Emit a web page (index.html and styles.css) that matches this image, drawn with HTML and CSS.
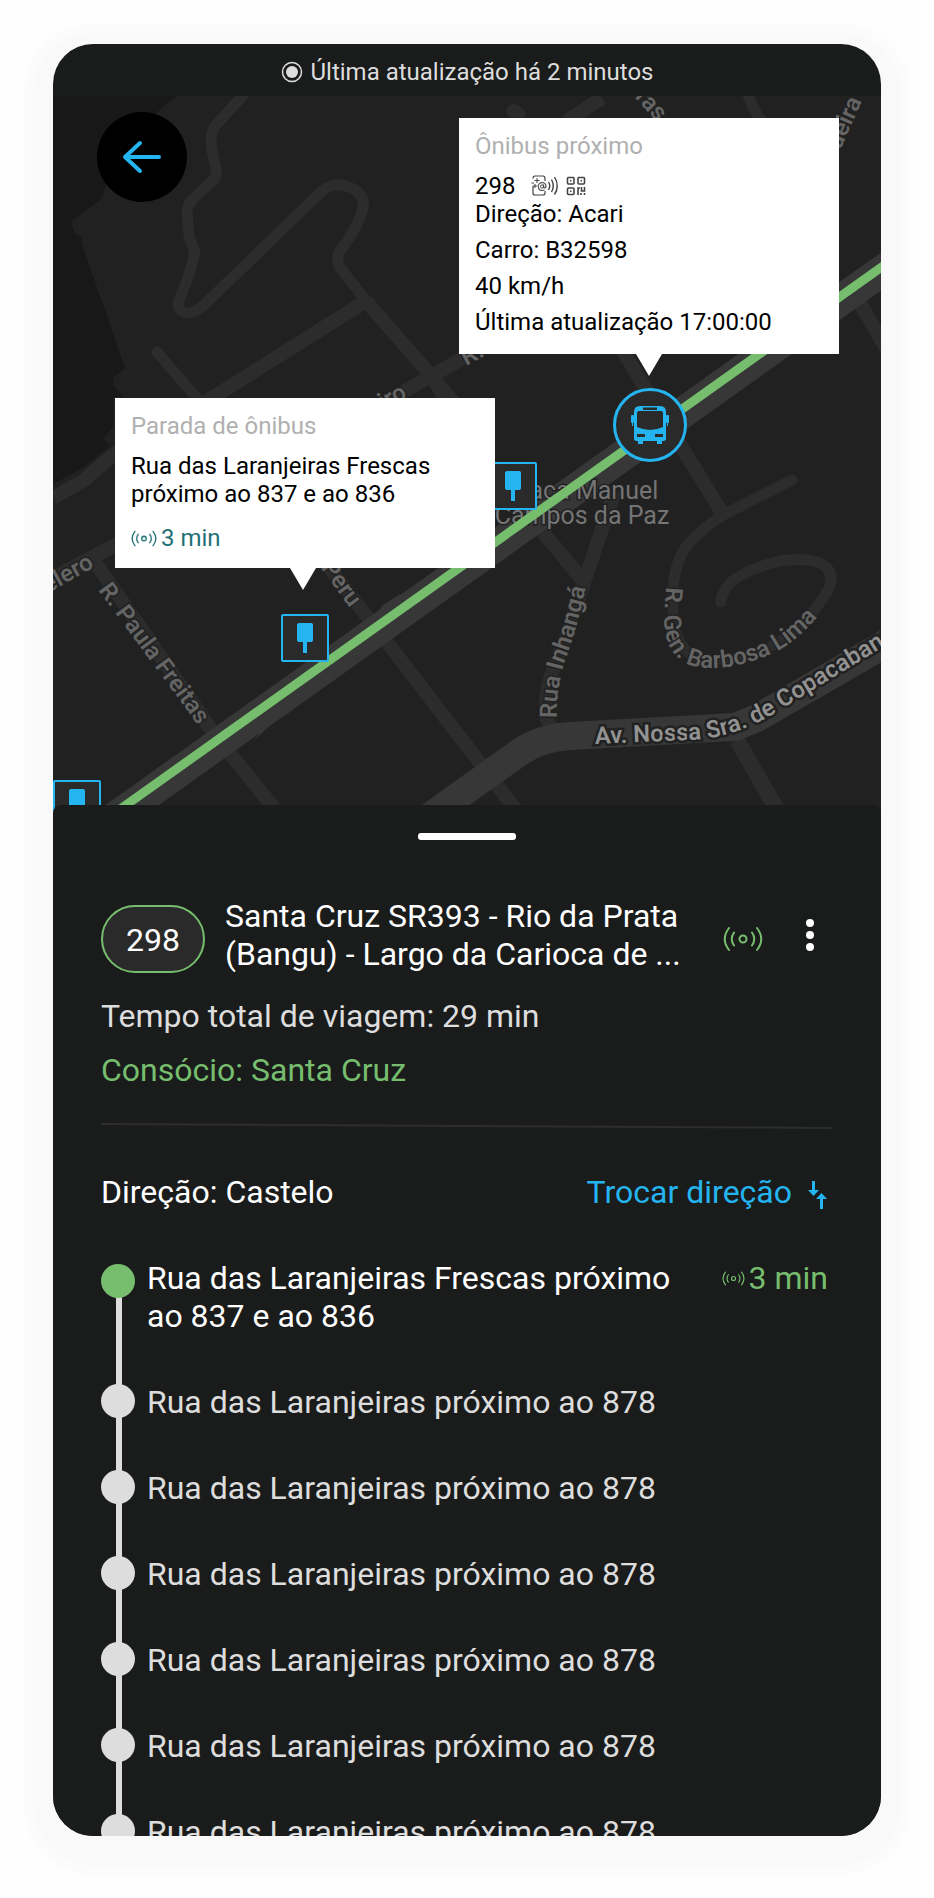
FILE: index.html
```html
<!DOCTYPE html>
<html lang="pt-BR">
<head>
    <meta charset="UTF-8">
    <meta name="viewport" content="width=device-width, initial-scale=1.0">
    <title>Linha 298</title>
    <link rel="stylesheet" href="styles.css">
</head>
<body>
    <!-- shared icons -->
    <svg class="sprite" aria-hidden="true">
        <symbol id="signal" viewBox="0 0 40 26">
            <g fill="none" stroke="currentColor" stroke-width="2" stroke-linecap="round">
                <circle cx="20" cy="13" r="3.5"/>
                <path d="M11 6.5Q6.500 13 11 19.500M6 2Q-2.500 13 6 24M29 6.500Q33.500 13 29 19.500M34 2Q42.500 13 34 24"/>
            </g>
        </symbol>
        <symbol id="stop" viewBox="0 0 48 48">
            <rect x="1" y="1" width="46" height="46" rx="1" fill="#2a2a2a" stroke="#24b5f0" stroke-width="2"/>
            <rect x="16" y="9" width="16" height="19" rx="2" fill="#24b5f0"/>
            <rect x="22" y="27" width="4" height="12" fill="#24b5f0"/>
        </symbol>
    </svg>

    <div class="phone">
        <header class="status">
            <svg class="status-icon" viewBox="0 0 22 22" aria-hidden="true">
                <circle cx="11" cy="11" r="9.500" fill="none" stroke="#ddd" stroke-width="1.500"/>
                <circle cx="11" cy="11" r="6" fill="#ddd"/>
            </svg>
            <span>Última atualização há 2 minutos</span>
        </header>

        <section class="map">
            <svg class="streets" viewBox="53 96 828 718" preserveAspectRatio="xMidYMin slice" aria-hidden="true">
                <rect x="53" y="96" width="828" height="718" fill="#212121"/>
                <path fill="#181818" d="M53 96H178Q160 106 150 122L110 176L105 188Q103 199 97 202L71 221L74 232L81 237L84 250L125 368L113 378L114 386L124 397H113V428L103 438L110 446L83 468L53 484Z"/>

                <!-- small streets -->
                <g fill="none" stroke="#2c2c2c" stroke-width="11" stroke-linecap="round" stroke-linejoin="round">
                    <path d="M246 92L216 125Q209 133 212 150L216 168Q218 178 209 184L193 199Q187 205 187 213L189 236Q191 244 195 251Q191 270 186 283L179 300Q177 308 183 312Q189 316 203 306L322 191Q335 181 349 187Q366 194 363 208Q359 225 340 251Q335 260 341 269L368 303"/>
                    <path d="M157 352L200 402"/>
                    <path d="M792 480L723 515Q690 537 681 555Q674 570 673 590V615Q675 650 700 659Q740 664 777 643Q808 625 829 588Q836 572 820 563Q805 557 780 561Q755 567 740 576Q723 585 721 602"/>
                    <path d="M747 90Q750 106 762 122M512 112Q512 106 520 114"/>
                </g>
                <g fill="none" stroke="#2c2c2c" stroke-width="14" stroke-linejoin="round">
                    <path d="M366 301L212 398L113 455L83 481L53 498"/>
                    <path d="M366 301L433 378L460 410"/>
                    <path d="M53 578L380 405L465 357L570 119L602 98"/>
                    <path d="M90 555L215 735L274 808"/>
                    <path d="M433 378L445 400M240 470L300 530L383 637L480 763L520 815"/>
                    <path d="M533 520L584 582L565 640Q540 695 547 720L556 738"/>
                    <path d="M615 490L585 580"/>
                    <path d="M616 340L724 516"/>
                    <path d="M737 740L776 808" stroke-width="16"/>
                    <path d="M858 300L886 348"/>
                </g>

                <!-- avenues -->
                <path d="M100 828L900 258" fill="none" stroke="#373737" stroke-width="31"/>
                <path d="M253 742L262 730L290 712L340 670L354 632L362 624L374 618L382 606L400 594V625L270 725Z" fill="#373737"/>
                <path d="M400 838L468 789L520 752Q540 738 570 736L735 727L757 718L890 641" fill="none" stroke="#373737" stroke-width="28"/>

                <g class="place">
                    <text x="582" y="499" text-anchor="middle">Praça Manuel</text>
                    <text x="582" y="524" text-anchor="middle">Campos da Paz</text>
                </g>
                <g class="street">
                    <text transform="translate(98 590) rotate(53.500)">R. Paula Freitas</text>
                    <text transform="translate(350 608) rotate(54)" text-anchor="end">R. Peru</text>
                    <text transform="translate(95 567) rotate(-29)" text-anchor="end">elero</text>
                    <text transform="translate(408 397) rotate(-28)" text-anchor="end">eiro</text>
                    <text transform="translate(466 366) rotate(-28)">R.</text>
                    <text transform="translate(657 122) rotate(48)" text-anchor="end">bras</text>
                    <text transform="translate(862 101) rotate(-66)" text-anchor="end">deira</text>
                    <path id="inhanga" d="M557 718Q556 690 565 660Q580 622 590 565" fill="none" stroke="none"/>
                    <text><textPath href="#inhanga">Rua Inhangá</textPath></text>
                    <path id="barbosa" d="M666 587L664 618C664 645 675 662 697 667Q735 672 777 651Q805 637 838 590" fill="none" stroke="none"/>
                    <text><textPath href="#barbosa">R. Gen. Barbosa Lima</textPath></text>
                </g>
                <g class="avenue">
                    <path id="copacabana" d="M595 744L690 740Q735 738 775 713L960 600" fill="none" stroke="none"/>
                    <text><textPath href="#copacabana">Av. Nossa Sra. de Copacabana</textPath></text>
                </g>

                <!-- bus route -->
                <path d="M98 825L900 254" fill="none" stroke="#76be6e" stroke-width="9"/>
            </svg>

            <button class="back" aria-label="Voltar">
                <svg viewBox="0 0 40 34" aria-hidden="true">
                    <path d="M37 17H3M18 3L3 17L18 31" fill="none" stroke="#24b5f0" stroke-width="4" stroke-linecap="round" stroke-linejoin="round"/>
                </svg>
            </button>

            <svg class="stop stop-a"><use href="#stop"/></svg>
            <svg class="stop stop-b"><use href="#stop"/></svg>
            <svg class="stop stop-c"><use href="#stop"/></svg>

            <svg class="bus" viewBox="0 0 76 76" aria-hidden="true">
                <circle cx="38" cy="38" r="35.500" fill="#2a2a2a" stroke="#24b5f0" stroke-width="3"/>
                <g fill="#24b5f0">
                    <path fill-rule="evenodd" d="M28 19H48Q54 19 54 25V52Q54 54 50 54V57H45V54H31V57H26V54Q22 54 22 52V25Q22 19 28 19ZM31 20.500V23H45V20.500ZM27 24Q25 24 25 26V40Q38 46 51 40V26Q51 24 49 24ZM25 47V50H33V47ZM43 47V50H51V47Z"/>
                    <rect x="19" y="28" width="3" height="8" rx="1"/>
                    <rect x="54" y="28" width="3" height="8" rx="1"/>
                    <path d="M20 35H21V39H20ZM55 35H56V39H55Z"/>
                </g>
            </svg>

            <div class="tip tip-bus">
                <h2>Ônibus próximo</h2>
                <p class="line">298
                    <svg class="nfc" viewBox="0 0 28 22" aria-hidden="true">
                        <g fill="none" stroke="#444">
                            <path d="M2 3.500Q2 1 4 1H12Q14 1 14 3.500V6M2 11V18Q2 20 4 20H12Q14 20 14 18V16" stroke-width="1.200"/>
                            <path d="M6 3V8M3.500 5.500H8.500M4 9V13M2 11H6M.500 8H3" stroke-width="1"/>
                            <circle cx="11" cy="11.500" r="1.600"/>
                            <path d="M12.600 9.500V12.500Q14.500 13.500 15 11.500Q15 7.500 11 7.500Q7.200 8 7.200 11.500Q7.500 15.500 11 15.500L13.500 15" stroke-width="1.100"/>
                            <path d="M17.500 7Q20 11 17.500 15M20.500 4.500Q24 11 20.500 17M23.500 2Q29 11 23.500 19.500" stroke-width="1.400"/>
                        </g>
                    </svg>
                    <svg class="qr" viewBox="0 0 20 20" aria-hidden="true">
                        <g fill="none" stroke="#444" stroke-width="1.600">
                            <rect x="1.500" y="1.500" width="6.500" height="6.500" rx="1"/>
                            <rect x="12" y="1.500" width="6.500" height="6.500" rx="1"/>
                            <rect x="1.500" y="12" width="6.500" height="6.500" rx="1"/>
                            <path d="M12 19V12H14M15.500 11V15H18.500V11M15 17V19M18.500 17V19"/>
                        </g>
                        <path fill="#444" d="M4 4h1.500v1.500H4zM14.500 4H16v1.500h-1.500zM4 14.500h1.500V16H4z"/>
                    </svg>
                </p>
                <p>Direção: Acari</p>
                <p class="spaced">Carro: B32598</p>
                <p class="spaced">40 km/h</p>
                <p class="spaced">Última atualização 17:00:00</p>
            </div>

            <div class="tip tip-stop">
                <h2>Parada de ônibus</h2>
                <p>Rua das Laranjeiras Frescas próximo ao 837 e ao 836</p>
                <p class="eta"><svg class="eta-icon" aria-hidden="true"><use href="#signal"/></svg>3 min</p>
            </div>
        </section>

        <main class="sheet">
            <div class="handle"></div>

            <div class="route">
                <span class="badge">298</span>
                <h1>Santa Cruz SR393 - Rio da Prata (Bangu) - Largo da Carioca de ...</h1>
                <svg class="signal" aria-hidden="true"><use href="#signal"/></svg>
                <button class="menu" aria-label="Mais opções">
                    <svg viewBox="0 0 10 34" aria-hidden="true">
                        <g fill="#fff"><circle cx="5" cy="5" r="4"/><circle cx="5" cy="17" r="4"/><circle cx="5" cy="29" r="4"/></g>
                    </svg>
                </button>
            </div>
            <p class="total">Tempo total de viagem: 29 min</p>
            <p class="operator">Consócio: Santa Cruz</p>

            <svg class="divider" viewBox="0 0 732 6" preserveAspectRatio="none" aria-hidden="true">
                <path d="M0 1L732 5" stroke="#2d2d2d" stroke-width="2"/>
            </svg>

            <div class="direction">
                <span>Direção: Castelo</span>
                <button class="swap">Trocar direção
                    <svg viewBox="0 0 20 30" aria-hidden="true">
                        <path fill="#24b5f0" d="M4 2H7V11H11L5.500 17L0 11H4ZM12 30H15V20H19L13.500 14L8 20H12Z"/>
                    </svg>
                </button>
            </div>

            <ol class="stops">
                <li class="current">
                    <span class="dot"></span>
                    <span>Rua das Laranjeiras Frescas próximo ao 837 e ao 836</span>
                    <span class="arrival"><svg class="arrival-icon" aria-hidden="true"><use href="#signal"/></svg>3 min</span>
                </li>
                <li><span class="dot"></span><span>Rua das Laranjeiras próximo ao 878</span></li>
                <li><span class="dot"></span><span>Rua das Laranjeiras próximo ao 878</span></li>
                <li><span class="dot"></span><span>Rua das Laranjeiras próximo ao 878</span></li>
                <li><span class="dot"></span><span>Rua das Laranjeiras próximo ao 878</span></li>
                <li><span class="dot"></span><span>Rua das Laranjeiras próximo ao 878</span></li>
                <li><span class="dot"></span><span>Rua das Laranjeiras próximo ao 878</span></li>
            </ol>
        </main>
    </div>
</body>
</html>
```

FILE: styles.css
```css
* {
    box-sizing: border-box;
}
body {
    display: flex;
    height: 100vh;
    margin: 0;
    padding: 44px 53px 62px;
    background-color: #fefefe;
    font-family: Roboto, "Liberation Sans", sans-serif;
}
h1, h2, p, ol {
    margin: 0;
    padding: 0;
    font-weight: 400;
}
button {
    border: 0;
    padding: 0;
    background: none;
    font: inherit;
    cursor: pointer;
}
svg {
    display: block;
}
.sprite {
    position: absolute;
    width: 0;
    height: 0;
}
.phone {
    display: flex;
    flex-direction: column;
    flex: 1;
    min-width: 0;
    overflow: hidden;
    border-radius: 40px;
    background-color: #1a1b1b;
    box-shadow: 0 9px 14px 25px #f9f9f9;
}

/* top bar */
.status {
    display: flex;
    flex: none;
    align-items: center;
    justify-content: center;
    gap: 8px;
    height: 52px;
    padding-top: 4px;
    color: #ddd;
    font-size: 24px;
    line-height: 28px;
}
.status-icon {
    width: 22px;
    height: 22px;
}

/* map */
.map {
    position: relative;
    flex: none;
    height: 717px;
}
.streets {
    width: 100%;
    height: 100%;
}
.place, .street, .avenue {
    font-size: 24px;
    fill: #747474;
    stroke: #212121;
    stroke-width: 3px;
    paint-order: stroke;
}
.place {
    font-size: 25px;
}
.street {
    font-weight: 600;
    fill: #646464;
}
.avenue {
    font-weight: 600;
    fill: #929292;
    stroke-width: 5px;
}
.back {
    position: absolute;
    left: 44px;
    top: 16px;
    display: flex;
    align-items: center;
    justify-content: center;
    width: 90px;
    height: 90px;
    border-radius: 50%;
    background-color: #000;
}
.back svg {
    width: 40px;
    height: 34px;
}
.stop {
    position: absolute;
    width: 48px;
    height: 48px;
}
.stop-a {
    left: 228px;
    top: 518px;
}
.stop-b {
    left: 436px;
    top: 366px;
}
.stop-c {
    left: 0;
    top: 684px;
}
.bus {
    position: absolute;
    left: 559px;
    top: 291px;
    width: 76px;
    height: 76px;
}
.tip {
    position: absolute;
    width: 380px;
    padding: 14px 16px 16px;
    background-color: #fff;
    color: #000;
    font-size: 24px;
    line-height: 28px;
}
.tip::after {
    content: "";
    position: absolute;
    top: 100%;
    left: 50%;
    border: 13px solid transparent;
    border-top: 22px solid #fff;
    border-bottom: 0;
    transform: translateX(-50%);
}
.tip h2 {
    margin-bottom: 12px;
    color: #b0b0b0;
    font-size: 24px;
}
.tip-bus {
    left: 406px;
    top: 22px;
    padding-bottom: 18px;
}
.tip-stop {
    left: 62px;
    top: 302px;
}
.tip-stop::after {
    left: 188px;
}
.spaced {
    margin-top: 8px;
}
.line {
    display: flex;
    align-items: center;
}
.nfc {
    width: 28px;
    height: 22px;
    margin: 0 7px 0 16px;
}
.qr {
    width: 20px;
    height: 20px;
}
.eta {
    display: flex;
    align-items: center;
    gap: 4px;
    margin-top: 16px;
    color: #1f7075;
}
.eta-icon {
    flex: none;
    width: 26px;
    height: 17px;
}

/* bottom sheet */
.sheet {
    position: relative;
    flex: 1;
    min-height: 0;
    margin-top: -8px;
    padding: 28px 48px 0;
    border-radius: 8px 8px 0 0;
    background-color: #1a1b1b;
    color: #fff;
    font-size: 32px;
    line-height: 38px;
}
.handle {
    width: 98px;
    height: 7px;
    margin: 0 auto 57px;
    border-radius: 3px;
    background-color: #fff;
}
.route {
    display: flex;
    align-items: center;
}
.badge {
    flex: none;
    width: 104px;
    margin: 8px 20px 0 0;
    padding: 14px 0 12px;
    border: 2px solid #76be6e;
    border-radius: 34px;
    background-color: #2a2a2a;
    text-align: center;
}
.route h1 {
    flex: 1;
    font-size: 32px;
}
.signal {
    flex: none;
    width: 40px;
    height: 26px;
    margin: 8px 42px 0 32px;
    color: #76be6e;
}
.menu svg {
    width: 10px;
    height: 34px;
    margin-right: 18px;
}
.total {
    margin-top: 24px;
    color: #ddd;
}
.operator {
    margin-top: 16px;
    color: #76be6e;
}
.divider {
    width: 100%;
    height: 6px;
    margin: 34px 0 44px;
}
.direction {
    display: flex;
    justify-content: space-between;
    padding-right: 5px;
}
.swap {
    display: flex;
    align-items: center;
    gap: 16px;
    color: #24b5f0;
}
.swap svg {
    width: 20px;
    height: 30px;
    margin-top: 4px;
}
.stops {
    margin-top: 48px;
    list-style: none;
}
.stops li {
    display: grid;
    grid-template-columns: 34px 1fr auto;
    column-gap: 12px;
    padding: 0 5px 48px 0;
    background: linear-gradient(#ddd, #ddd) 15px 0 / 6px 100% no-repeat;
    color: #ddd;
}
.dot {
    width: 34px;
    height: 34px;
    margin-top: 1px;
    border-radius: 50%;
    background-color: #ddd;
}
.stops .current {
    background-position: 15px 30px;
    color: #fff;
}
.current .dot {
    margin-top: 5px;
    background-color: #76be6e;
}
.arrival {
    display: flex;
    align-items: center;
    align-self: start;
    gap: 4px;
    color: #76be6e;
}
.arrival-icon {
    flex: none;
    width: 23px;
    height: 15px;
}
```
